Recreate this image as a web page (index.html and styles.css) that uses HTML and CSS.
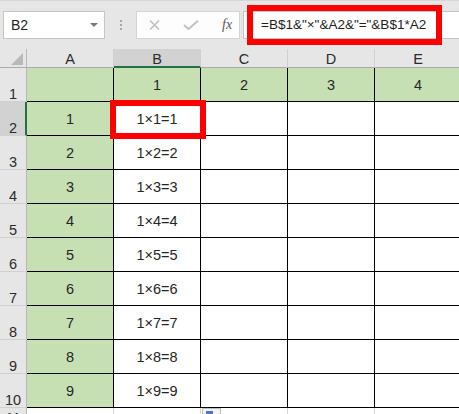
FILE: index.html
```html
<!DOCTYPE html>
<html>
<head>
<meta charset="utf-8">
<link rel="stylesheet" href="styles.css">
</head>
<body>
<div class="app">
  <div class="toolbar">
    <div class="namebox"><span class="nb-text">B2</span><span class="caret"></span></div>
    <div class="sep"><i></i><i></i><i></i></div>
    <div class="fxbox">
      <svg class="ico" width="13" height="10" viewBox="0 0 13 10"><path d="M2 0.5 L11 9.5 M11 0.5 L2 9.5" stroke="#c2c2c2" stroke-width="1.6" fill="none"/></svg>
      <svg class="ico" width="16" height="10" viewBox="0 0 16 10"><path d="M1 5 L5.5 9 L15 0.8" stroke="#c2c2c2" stroke-width="2" fill="none"/></svg>
      <span class="fx">fx</span>
    </div>
    <div class="formula">=B$1&amp;"×"&amp;A2&amp;"="&amp;B$1*A2</div>
  </div>
  <div class="sheet">
    <div class="corner"><svg width="27" height="19" viewBox="0 0 27 19"><polygon points="23,4 23,16 11,16" fill="#b9b9b9"/></svg></div>
    <div class="ch">A</div><div class="ch sel">B</div><div class="ch">C</div><div class="ch">D</div><div class="ch">E</div>

    <div class="rh">1</div><div class="c g"></div><div class="c g">1</div><div class="c g">2</div><div class="c g">3</div><div class="c g">4</div>
    <div class="rh sel">2</div><div class="c g">1</div><div class="c">1×1=1</div><div class="c"></div><div class="c"></div><div class="c"></div>
    <div class="rh">3</div><div class="c g">2</div><div class="c">1×2=2</div><div class="c"></div><div class="c"></div><div class="c"></div>
    <div class="rh">4</div><div class="c g">3</div><div class="c">1×3=3</div><div class="c"></div><div class="c"></div><div class="c"></div>
    <div class="rh">5</div><div class="c g">4</div><div class="c">1×4=4</div><div class="c"></div><div class="c"></div><div class="c"></div>
    <div class="rh">6</div><div class="c g">5</div><div class="c">1×5=5</div><div class="c"></div><div class="c"></div><div class="c"></div>
    <div class="rh">7</div><div class="c g">6</div><div class="c">1×6=6</div><div class="c"></div><div class="c"></div><div class="c"></div>
    <div class="rh">8</div><div class="c g">7</div><div class="c">1×7=7</div><div class="c"></div><div class="c"></div><div class="c"></div>
    <div class="rh">9</div><div class="c g">8</div><div class="c">1×8=8</div><div class="c"></div><div class="c"></div><div class="c"></div>
    <div class="rh">10</div><div class="c g">9</div><div class="c">1×9=9</div><div class="c"></div><div class="c"></div><div class="c"></div>
    <div class="rh">11</div><div class="b"></div><div class="b"></div><div class="b"></div><div class="b"></div><div class="b"></div>
  </div>
  <div class="mark mark-formula"></div>
  <div class="mark mark-cell"></div>
  <div class="paste"><i></i></div>
</div>
</body>
</html>
```

FILE: styles.css
```css
html, body {
  margin: 0;
  padding: 0;
  overflow: hidden;
  background: #ffffff;
}
.app {
  position: relative;
  width: 459px;
  height: 414px;
  overflow: hidden;
  font-family: "Liberation Sans", Arial, sans-serif;
  color: #262626;
}
.toolbar {
  height: 49px;
  box-sizing: border-box;
  background: #e6e6e6;
  border-top: 1px solid #d6d6d6;
  display: flex;
  align-items: flex-start;
  padding-top: 10px;
}
.namebox {
  margin-left: 3px;
  width: 102px;
  height: 28px;
  box-sizing: border-box;
  background: #fff;
  border: 1px solid #c6c6c6;
  display: flex;
  align-items: center;
  justify-content: space-between;
  padding: 0 6px 0 7px;
}
.nb-text {
  font-size: 14px;
  color: #262626;
}
.caret {
  width: 0;
  height: 0;
  border-left: 4px solid transparent;
  border-right: 4px solid transparent;
  border-top: 4px solid #7a7a7a;
}
.sep {
  width: 31px;
  height: 28px;
  display: flex;
  flex-direction: column;
  align-items: center;
  justify-content: center;
  gap: 2px;
}
.sep i {
  display: block;
  width: 2px;
  height: 2px;
  background: #a8a8a8;
}
.fxbox {
  width: 104px;
  height: 28px;
  box-sizing: border-box;
  background: #fdfdfd;
  border: 1px solid #d4d4d4;
  display: flex;
  align-items: center;
  padding-left: 11px;
}
.fxbox .ico {
  display: block;
}
.fxbox .ico:nth-child(2) {
  margin-left: 22px;
}
.fx {
  margin-left: 23px;
  font-family: "Liberation Serif", serif;
  font-style: italic;
  font-size: 14px;
  color: #595959;
}
.formula {
  margin-left: 3px;
  flex: 1;
  height: 28px;
  box-sizing: border-box;
  background: #fff;
  border: 1px solid #c6c6c6;
  border-right: none;
  font-size: 13.5px;
  line-height: 26px;
  padding-left: 17px;
  white-space: nowrap;
  color: #1e1e1e;
}
.sheet {
  display: grid;
  grid-template-columns: 27px repeat(5, 87px);
  grid-template-rows: 19px repeat(10, 34px) 18px;
  width: 462px;
  font-size: 14.5px;
}
.sheet > div {
  box-sizing: border-box;
  overflow: hidden;
}
.corner {
  background: #e6e6e6;
  border-right: 1px solid #b8b8b8;
  border-bottom: 1px solid #ababab;
}
.corner svg {
  display: block;
}
.ch {
  background: #e6e6e6;
  border-right: 1px solid #d0d0d0;
  border-bottom: 1px solid #ababab;
  display: flex;
  justify-content: center;
  align-items: flex-end;
  line-height: 14px;
  padding-bottom: 1px;
  color: #2b2b2b;
}
.ch.sel {
  background: #d2d2d2;
  border-bottom: 2px solid #217346;
  padding-bottom: 0;
}
.rh {
  background: #e6e6e6;
  border-right: 1px solid #b8b8b8;
  border-bottom: 1px solid #d0d0d0;
  display: flex;
  justify-content: center;
  align-items: flex-end;
  line-height: 13px;
  padding-bottom: 0;
  color: #2b2b2b;
}
.rh.sel {
  background: #d2d2d2;
  border-right: 2px solid #217346;
  padding-left: 1px;
}
.c {
  background: #fff;
  border-right: 1px solid #000;
  border-bottom: 1px solid #000;
  display: flex;
  justify-content: center;
  align-items: center;
  color: #262626;
}
.c.g {
  background: #c6e0b4;
}
.b {
  background: #fff;
  border-right: 1px solid #d4d4d4;
  border-bottom: 1px solid #d4d4d4;
}
.mark {
  position: absolute;
  box-sizing: border-box;
  border: 6px solid #ff0000;
}
.mark-formula {
  left: 247px;
  top: 5px;
  width: 195px;
  height: 40px;
}
.mark-cell {
  left: 110px;
  top: 100px;
  width: 96px;
  height: 39px;
}
.paste {
  position: absolute;
  left: 202px;
  top: 408px;
  width: 19px;
  height: 12px;
  box-sizing: border-box;
  border: 1px solid #bdbdbd;
  background: #f3f3f3;
}
.paste i {
  position: absolute;
  left: 3px;
  top: 2px;
  width: 7px;
  height: 5px;
  background: #4a78c2;
}
```
